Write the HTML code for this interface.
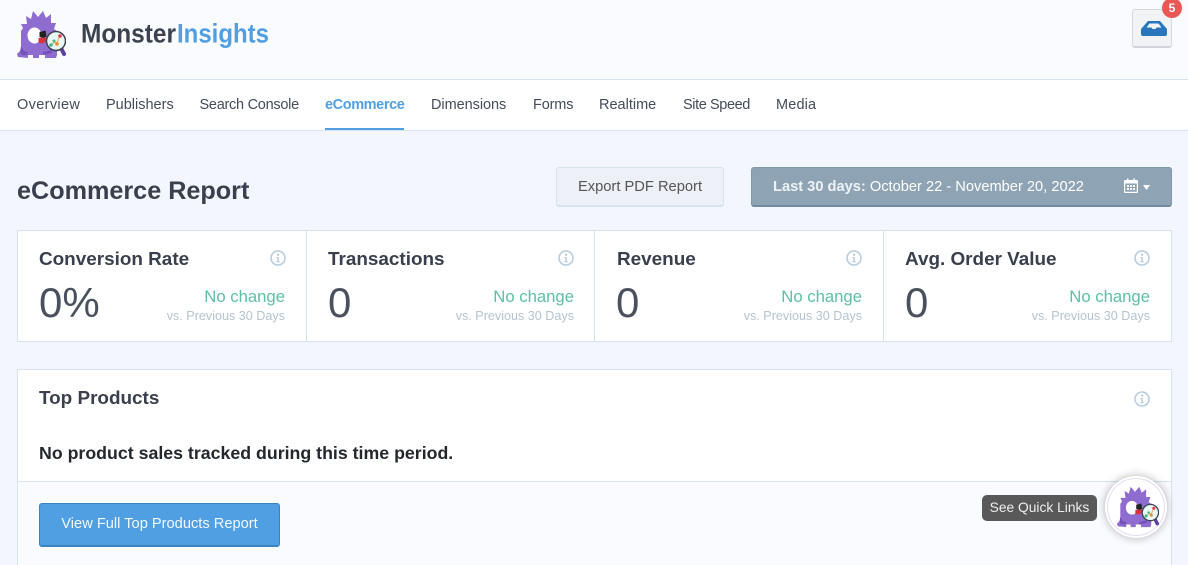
<!DOCTYPE html>
<html><head><meta charset="utf-8"><title>eCommerce Report</title>
<style>
*{box-sizing:border-box}
html,body{margin:0;padding:0;width:1188px;height:565px;overflow:hidden}
body{background:#f3f6fe;font-family:"Liberation Sans",sans-serif}
#w{position:relative;width:1188px;height:565px;overflow:hidden}
.a{position:absolute;white-space:nowrap}
.header{left:0;top:0;width:1188px;height:80px;background:#f9fbff;border-bottom:1px solid #d6e2ed}
.navbar{left:0;top:80px;width:1188px;height:51px;background:#fff;border-bottom:1px solid #d6e2ed}
.nav{top:96px;font-size:14.500px;line-height:18px;color:#444b5a}
.cards{left:17px;top:230px;width:1155px;height:112px;background:#fff;border:1px solid #d6e2ed}
.div{top:231px;width:1px;height:110px;background:#d6e2ed}
.ct{top:248.500px;font-size:18.900px;line-height:21px;font-weight:700;color:#393f4c}
.val{top:279px;font-size:42px;line-height:48px;color:#4a515e}
.nc{top:287px;width:120px;text-align:right;font-size:16.700px;line-height:19px;color:#5cc0a5}
.vs{top:308.500px;width:140px;text-align:right;font-size:12.600px;line-height:15px;color:#b5c3cf}
.i{width:16px;height:16px}
.m{filter:blur(.35px)}
</style></head><body><div id="w">
<svg width="0" height="0" style="position:absolute">
<defs>
<symbol id="mon" viewBox="16 10 50 48">
<path fill="#8f6dd0" d="M18 57l-1-3 4-4 0-19 2-3-2-4 6 0-1-8 5 3 2-8 5 6 5-6 3 7 5-4 0 9 5 0-2 6 3 2v24l-1 3-11 0 0-3-6 0 0 3-6 0 0-3-5 0 0 3z"/>
<path fill="#7351b8" d="M21 46l3 5 4 1-1 3-5 0-2-3zM43 52l9-2 0 3-9 2z"/>
<ellipse cx="34.500" cy="35.500" rx="7" ry="8" fill="#fff"/>
<path fill="#222" d="M39.500 32l6-1.500 1 6-3 1.500-4-1z"/>
<path fill="#d9323f" d="M38.500 38l7-.5 1 3.500-4 2.500-4-1z"/>
<path d="M61 48l3 6" stroke="#5b3fa0" stroke-width="4" stroke-linecap="round"/>
<circle cx="56" cy="41" r="9.500" fill="#e8f6f4" stroke="#3c4350" stroke-width="1.500"/>
<path d="M51 45l4-3 2 1 3-8" fill="none" stroke="#e8a64a" stroke-width="1"/>
<circle cx="51" cy="45" r="1.800" fill="#43b98f"/><circle cx="54" cy="41" r="1.500" fill="#43b98f"/><circle cx="57" cy="44" r="1.800" fill="#f08a2c"/><circle cx="60" cy="36" r="1.800" fill="#e5394b"/>
</symbol>
<symbol id="info" viewBox="0 0 16 16">
<circle cx="8" cy="8" r="7" fill="none" stroke="#b6cbe0" stroke-width="1.500"/>
<circle cx="8" cy="4.700" r="1.100" fill="#b6cbe0"/>
<path d="M6.400 7h2.400v4.200h1v1H6.300v-1h1V8h-.9z" fill="#b6cbe0"/>
</symbol>
</defs></svg>

<div class="a header"></div>
<svg class="a m" style="left:16px;top:10px" width="50" height="48"><use href="#mon" width="50" height="48"/></svg>
<svg class="a" style="left:78px;top:15px" width="196" height="36">
<text x="3" y="27.500" font-family="Liberation Sans" font-weight="700" font-size="27" fill="#3b434f" textLength="95" lengthAdjust="spacingAndGlyphs">Monster</text>
<text x="99" y="27.500" font-family="Liberation Sans" font-weight="700" font-size="27" fill="#509fe2" textLength="92" lengthAdjust="spacingAndGlyphs">Insights</text>
</svg>

<div class="a" style="left:1132px;top:9px;width:40px;height:39px;background:#f2f3f5;border:1px solid #d5d8dd;border-bottom:2px solid #d0d4da;border-radius:3px"></div>
<svg class="a" style="left:1141px;top:21px" width="26" height="15" viewBox="0 0 26 15"><path fill="#2a76bb" d="M7 0h12l7 8v5a2 2 0 0 1-2 2H2a2 2 0 0 1-2-2V8zM8.500 2.500L5.500 6.500h5l1 1.500h3l1-1.500h5l-3-4z"/></svg>
<div class="a" style="left:1162px;top:-2px;width:20px;height:20px;border-radius:50%;background:#eb5757;color:#fff;font-size:12px;font-weight:700;line-height:20px;text-align:center">5</div>

<div class="a navbar"></div>
<span class="a nav" style="left:17px;letter-spacing:.35px">Overview</span>
<span class="a nav" style="left:106px">Publishers</span>
<span class="a nav" style="left:199.500px;letter-spacing:-.27px">Search Console</span>
<span class="a nav" style="left:325px;color:#509fe2;font-weight:700;letter-spacing:-.4px">eCommerce</span>
<div class="a" style="left:325px;top:128px;width:79px;height:2px;background:#509fe2"></div>
<span class="a nav" style="left:431px;letter-spacing:-.05px">Dimensions</span>
<span class="a nav" style="left:533px;letter-spacing:-.15px">Forms</span>
<span class="a nav" style="left:599px">Realtime</span>
<span class="a nav" style="left:683px;letter-spacing:-.4px">Site Speed</span>
<span class="a nav" style="left:776px;letter-spacing:.15px">Media</span>

<div class="a" style="left:17px;top:177px;font-size:25.200px;line-height:28px;font-weight:700;color:#393f4c">eCommerce Report</div>

<div class="a" style="left:556px;top:167px;width:168px;height:40px;background:#edf0f7;border:1px solid #d6e2ed;border-bottom-width:2px;border-radius:3px;text-align:center;font-size:14.700px;line-height:38px;color:#555">Export PDF Report</div>

<div class="a" style="left:751px;top:167px;width:421px;height:40px;background:#8ea4b4;border:1px solid #7f97a9;border-bottom:2px solid #708ba0;border-radius:3px"></div>
<div class="a" style="left:773px;top:179px;font-size:14.650px;line-height:16px;color:#fff"><b style="color:#eef2f5">Last 30 days:</b> October 22 - November 20, 2022</div>
<svg class="a" style="left:1124px;top:178px" width="28" height="16" viewBox="0 0 28 16">
<path fill="#fff" fill-rule="evenodd" d="M1 2H3V.5h1.500V2h5V.5H11V2h2a1 1 0 0 1 1 1v11a1 1 0 0 1-1 1H1a1 1 0 0 1-1-1V3a1 1 0 0 1 1-1zM1.200 5.500v8.300h11.600V5.500z"/>
<path fill="#fff" d="M3 7h2v2H3zM6 7h2v2H6zM9 7h2v2H9zM3 10h2v2H3zM6 10h2v2H6zM9 10h2v2H9z"/>
<path fill="#fff" d="M19 7h7l-3.500 5z"/>
</svg>

<div class="a cards"></div>
<div class="a div" style="left:306px"></div>
<div class="a div" style="left:594px"></div>
<div class="a div" style="left:883px"></div>

<span class="a ct" style="left:39px">Conversion Rate</span>
<span class="a ct" style="left:328px">Transactions</span>
<span class="a ct" style="left:617px">Revenue</span>
<span class="a ct" style="left:905px">Avg. Order Value</span>

<svg class="a i" style="left:269.500px;top:250px"><use href="#info" width="16" height="16"/></svg>
<svg class="a i" style="left:558px;top:250px"><use href="#info" width="16" height="16"/></svg>
<svg class="a i" style="left:846px;top:250px"><use href="#info" width="16" height="16"/></svg>
<svg class="a i" style="left:1134px;top:250px"><use href="#info" width="16" height="16"/></svg>

<span class="a val" style="left:39px">0%</span>
<span class="a val" style="left:328px">0</span>
<span class="a val" style="left:616px">0</span>
<span class="a val" style="left:905px">0</span>

<span class="a nc" style="left:165px">No change</span>
<span class="a nc" style="left:454px">No change</span>
<span class="a nc" style="left:742px">No change</span>
<span class="a nc" style="left:1030px">No change</span>
<span class="a vs" style="left:145px">vs. Previous 30 Days</span>
<span class="a vs" style="left:434px">vs. Previous 30 Days</span>
<span class="a vs" style="left:722px">vs. Previous 30 Days</span>
<span class="a vs" style="left:1010px">vs. Previous 30 Days</span>

<div class="a" style="left:17px;top:369px;width:1155px;height:200px;background:#fff;border:1px solid #d6e2ed"></div>
<span class="a ct" style="left:39px;top:388px">Top Products</span>
<svg class="a i" style="left:1134px;top:391px"><use href="#info" width="16" height="16"/></svg>
<div class="a" style="left:39px;top:442px;font-size:17.750px;line-height:22px;font-weight:700;color:#23282d">No product sales tracked during this time period.</div>
<div class="a" style="left:18px;top:481px;width:1153px;height:84px;background:#fafbff;border-top:1px solid #d6e2ed"></div>

<div class="a" style="left:39px;top:503px;width:241px;height:44px;background:#509fe2;border:1px solid #3a83c1;border-bottom-width:2px;border-radius:3px;text-align:center;font-size:14.650px;line-height:40px;color:#f2f8fe">View Full Top Products Report</div>

<div class="a" style="left:982px;top:495px;width:115px;height:26px;background:#595959;border-radius:5px;text-align:center;font-size:13.800px;line-height:26px;color:#eee">See Quick Links</div>
<div class="a" style="left:1105px;top:476px;width:62px;height:62px;border-radius:50%;background:#fff;box-shadow:0 0 9px rgba(0,0,0,.3)"></div>
<div class="a" style="left:1107px;top:478px;width:58px;height:58px;border-radius:50%;background:#fff;border:1.500px solid #e4dcf3"></div>
<svg class="a m" style="left:1116px;top:485px" width="43" height="43"><use href="#mon" width="43" height="43"/></svg>
</div></body></html>
